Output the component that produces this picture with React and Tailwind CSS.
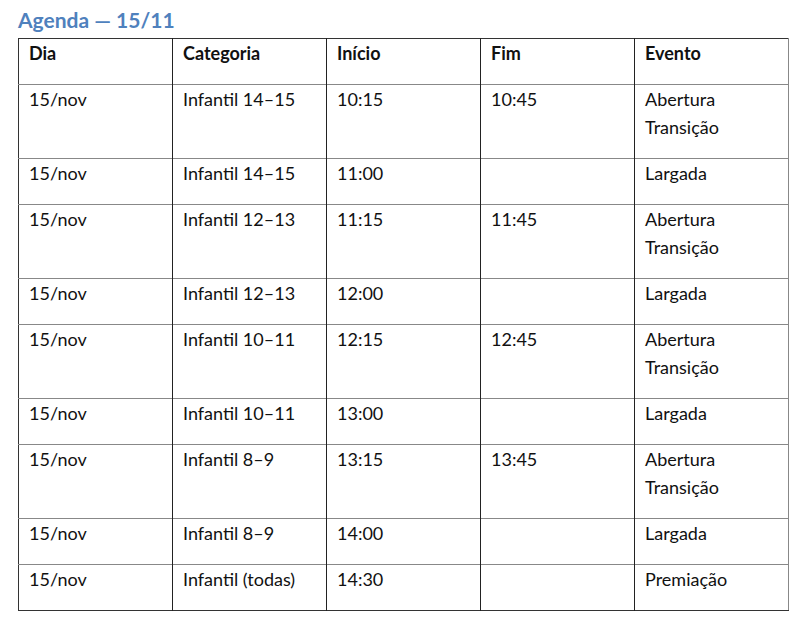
import React from 'react';

const rows = [
    ['15/nov', 'Infantil 14–15', '10:15', '10:45', ['Abertura', 'Transição']],
    ['15/nov', 'Infantil 14–15', '11:00', '', ['Largada']],
    ['15/nov', 'Infantil 12–13', '11:15', '11:45', ['Abertura', 'Transição']],
    ['15/nov', 'Infantil 12–13', '12:00', '', ['Largada']],
    ['15/nov', 'Infantil 10–11', '12:15', '12:45', ['Abertura', 'Transição']],
    ['15/nov', 'Infantil 10–11', '13:00', '', ['Largada']],
    ['15/nov', 'Infantil 8–9', '13:15', '13:45', ['Abertura', 'Transição']],
    ['15/nov', 'Infantil 8–9', '14:00', '', ['Largada']],
    ['15/nov', 'Infantil (todas)', '14:30', '', ['Premiação']],
];

const headers = ['Dia', 'Categoria', 'Início', 'Fim', 'Evento'];

const cell = 'w-[154px] border-l border-[#222] pl-[10px] pt-0 pb-[17px] align-top first:border-l-0';

const App = () => {
    return (
        <div className="min-h-screen bg-white font-['Lato','Open_Sans',sans-serif] text-[18px] leading-[28px] text-[#111]">
            <h1 className="pl-[18px] pt-[6px] h-[38px] text-[21px] leading-[28px] font-bold text-[#4f81bd]">Agenda — 15/11</h1>
            <table className="ml-[18px] w-[771px] table-fixed border-collapse border border-[#333] border-r-[#888]">
                <thead>
                    <tr className="border-b border-[#888]">
                        {headers.map(h => (
                            <th key={h} className={`${cell} text-left font-bold`}>{h}</th>
                        ))}
                    </tr>
                </thead>
                <tbody>
                    {rows.map((r, i) => (
                        <tr key={i} className="border-b border-[#888] last:border-b-[#333]">
                            <td className={cell}>{r[0]}</td>
                            <td className={cell}>{r[1]}</td>
                            <td className={cell}>{r[2]}</td>
                            <td className={cell}>{r[3]}</td>
                            <td className={cell}>
                                {r[4].map(t => <div key={t}>{t}</div>)}
                            </td>
                        </tr>
                    ))}
                </tbody>
            </table>
        </div>
    );
};

export default App;
